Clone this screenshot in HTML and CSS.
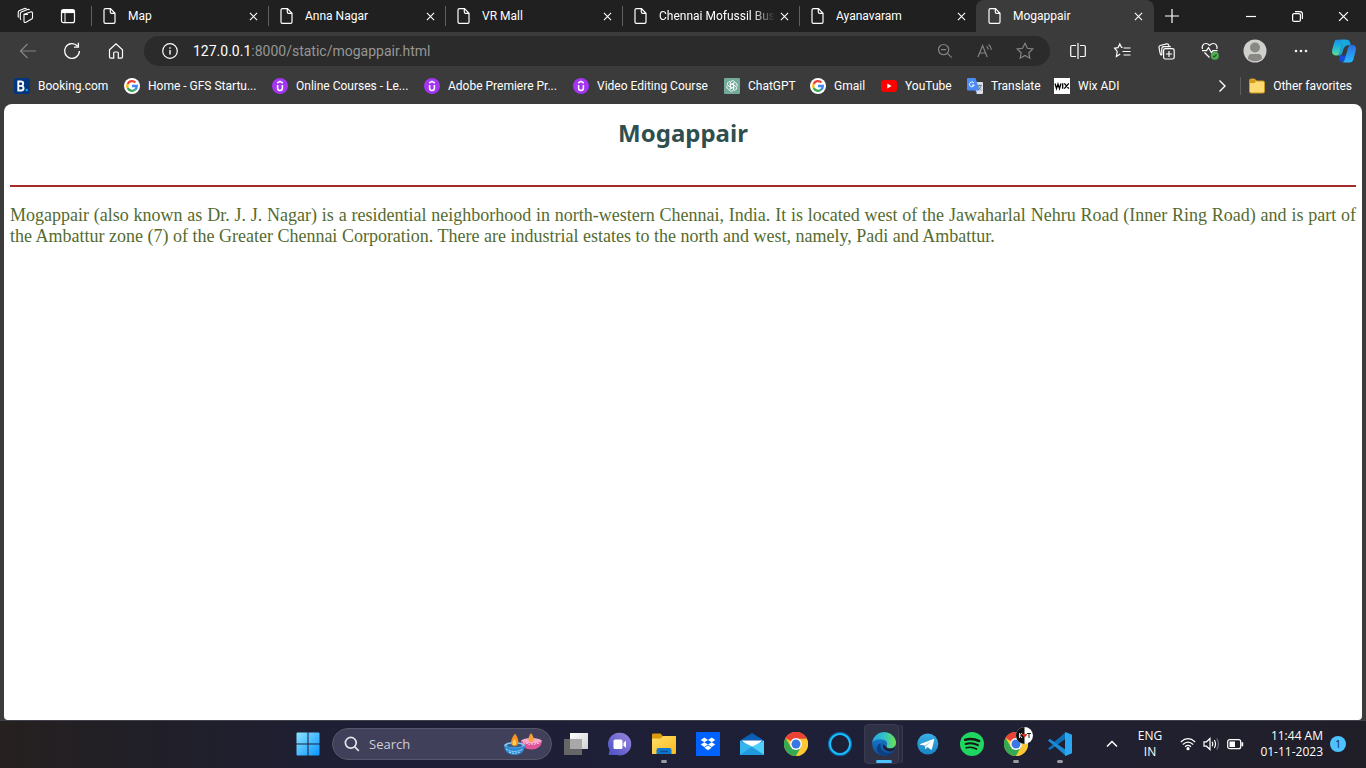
FILE: index.html
```html
<!DOCTYPE html>
<html lang="en">
<head>
<meta charset="utf-8">
<title>Mogappair</title>
<link rel="stylesheet" href="styles.css">
</head>
<body>
<svg class="defs" aria-hidden="true">
  <defs>
    <linearGradient id="g-win" x1="0" y1="0" x2="1" y2="1"><stop offset="0" stop-color="#8be4ff"/><stop offset="1" stop-color="#0a95ff"/></linearGradient>
    <linearGradient id="g-cop1" x1="0" y1="0" x2="0" y2="1"><stop offset="0" stop-color="#1a8fe6"/><stop offset=".5" stop-color="#22b8d8"/><stop offset="1" stop-color="#5fe08c"/></linearGradient>
    <linearGradient id="g-cop2" x1="0" y1="0" x2="0" y2="1"><stop offset="0" stop-color="#2a6fe0"/><stop offset="1" stop-color="#27b9ff"/></linearGradient>
    <linearGradient id="g-chat" x1="0" y1="1" x2="1" y2="0"><stop offset="0" stop-color="#4a4fc4"/><stop offset="1" stop-color="#9b86dd"/></linearGradient>
    <linearGradient id="g-folder" x1="0" y1="0" x2="1" y2="1"><stop offset="0" stop-color="#ffdf66"/><stop offset="1" stop-color="#fbb920"/></linearGradient>
    <linearGradient id="g-edge" x1="0" y1="0" x2="1" y2="0"><stop offset="0" stop-color="#27a4e0"/><stop offset=".5" stop-color="#2fc3c9"/><stop offset="1" stop-color="#6de04d"/></linearGradient>
    <linearGradient id="g-edge2" x1="0" y1="0" x2="0" y2="1"><stop offset="0" stop-color="#1b87dc"/><stop offset="1" stop-color="#0f4b94"/></linearGradient>
    <linearGradient id="g-tg" x1="0" y1="0" x2="0" y2="1"><stop offset="0" stop-color="#38b0e6"/><stop offset="1" stop-color="#1a84c4"/></linearGradient>
    <linearGradient id="g-task" x1="0" y1="0" x2="1" y2="1"><stop offset="0" stop-color="#fff"/><stop offset="1" stop-color="#d0d0d0"/></linearGradient>
    <symbol id="i-file" viewBox="0 0 16 16"><path d="M3.500.7h5L13 5.300V14q0 1.300-1.300 1.300H3.300Q2 15.300 2 14V2Q2 .7 3.500.7zM8.300.8V4q0 1.400 1.400 1.400h3.200"/></symbol>
    <symbol id="i-x" viewBox="0 0 10 10"><path d="M1 1l8 8M9 1L1 9"/></symbol>
    <symbol id="i-google" viewBox="0 0 16 16"><circle cx="8" cy="8" r="8" fill="#fff"/><g fill="none" stroke-width="2.300"><path d="M11.400 4.500A4.800 4.800 0 0 0 3.700 5.900" stroke="#ea4335"/><path d="M3.700 5.900a4.800 4.800 0 0 0 0 4.200" stroke="#fbbc05"/><path d="M3.700 10.100a4.800 4.800 0 0 0 7.400 1.600" stroke="#34a853"/><path d="M11.100 11.700A4.800 4.800 0 0 0 12.800 8H8" stroke="#4285f4"/></g></symbol>
    <symbol id="i-udemy" viewBox="0 0 16 16"><circle cx="8" cy="8" r="8" fill="#a435f0"/><path d="M5.200 5L8 3.400 10.800 5M5.600 7v3.200q0 2.200 2.400 2.200t2.400-2.200V7" fill="none" stroke="#fff" stroke-width="1.500"/></symbol>
    <symbol id="i-chrome" viewBox="0 0 24 24"><circle cx="12" cy="12" r="12" fill="#fcc934"/><path d="M12 12L1.600 6A12 12 0 0 1 22.400 6z" fill="#ea4335"/><path d="M1.600 6A12 12 0 0 0 12 24l5.200-9L12 12 6.800 15z" fill="#34a853"/><path d="M12 6.500h10.700A12 12 0 0 1 12 24l5-9z" fill="#fcc934"/><path d="M1.600 6A12 12 0 0 1 22.700 6.500H12z" fill="#ea4335"/><circle cx="12" cy="12" r="5.900" fill="#fff"/><circle cx="12" cy="12" r="4.500" fill="#3b78e7"/></symbol>
  </defs>
</svg>
<div class="window">
  <header class="browser">
    <nav class="tabstrip" aria-label="Tabs">
      <div class="tab-tools">
        <button class="plain" aria-label="Workspaces"><svg class="line" width="18" height="18" viewBox="0 0 18 18"><path d="M7 7.300l6.500-2.300q2-.5 2 1.200v4.500q0 1-.9 1.400L9 15.300q-2 .8-2-1zM7.500 7.500h3.500M4.200 12.800q-.9-.3-.9-1.500V7q0-1.600 1.500-2.200l5.700-2.200q1.500-.5 2 .5M1.600 10.500q-.4-.3-.4-1.300V5.600q0-1.600 1.300-2.200l5-1.900q1.200-.4 2 .2" stroke-width="1.100"/></svg></button>
        <button class="plain" aria-label="Tab actions"><svg class="line" width="16" height="16" viewBox="0 0 16 16"><rect x="1.500" y="1.700" width="13" height="13" rx="2"/><path d="M1.500 3.500h13" stroke-width="3.200"/><path d="M5 4v10" stroke-width="1"/></svg></button>
      </div>
      <div class="tab"><svg class="line" width="16" height="16"><use href="#i-file"/></svg><span>Map</span><button class="close" aria-label="Close Map"><svg class="line" width="9" height="9"><use href="#i-x"/></svg></button></div>
      <div class="tab"><svg class="line" width="16" height="16"><use href="#i-file"/></svg><span>Anna Nagar</span><button class="close" aria-label="Close Anna Nagar"><svg class="line" width="9" height="9"><use href="#i-x"/></svg></button></div>
      <div class="tab"><svg class="line" width="16" height="16"><use href="#i-file"/></svg><span>VR Mall</span><button class="close" aria-label="Close VR Mall"><svg class="line" width="9" height="9"><use href="#i-x"/></svg></button></div>
      <div class="tab"><svg class="line" width="16" height="16"><use href="#i-file"/></svg><span class="faded">Chennai Mofussil Bus</span><button class="close" aria-label="Close Chennai Mofussil Bus"><svg class="line" width="9" height="9"><use href="#i-x"/></svg></button></div>
      <div class="tab"><svg class="line" width="16" height="16"><use href="#i-file"/></svg><span>Ayanavaram</span><button class="close" aria-label="Close Ayanavaram"><svg class="line" width="9" height="9"><use href="#i-x"/></svg></button></div>
      <div class="tab active"><svg class="line" width="16" height="16"><use href="#i-file"/></svg><span>Mogappair</span><button class="close" aria-label="Close Mogappair"><svg class="line" width="9" height="9"><use href="#i-x"/></svg></button></div>
      <button class="plain new-tab" aria-label="New tab"><svg class="line" width="14" height="14" viewBox="0 0 14 14"><path d="M7 0v14M0 7h14"/></svg></button>
      <div class="win-controls">
        <button class="plain" aria-label="Minimize"><svg class="line" width="10" height="10" viewBox="0 0 10 10"><path d="M0 5.500h10"/></svg></button>
        <button class="plain" aria-label="Restore"><svg class="line" width="11" height="11" viewBox="0 0 11 11"><rect x=".6" y="2.600" width="7.800" height="7.800" rx="1.500"/><path d="M3 .6h5q2.400 0 2.400 2.400v5"/></svg></button>
        <button class="plain" aria-label="Close window"><svg class="line" width="11" height="11"><use href="#i-x"/></svg></button>
      </div>
    </nav>
    <div class="toolbar">
      <button class="plain dim" aria-label="Back"><svg class="line" width="18" height="16" viewBox="0 0 18 16"><path d="M17 8H1.500M8.500 1L1.500 8l7 7"/></svg></button>
      <button class="plain" aria-label="Refresh"><svg class="line" width="18" height="18" viewBox="0 0 18 18"><path d="M14.500 4A7.400 7.400 0 1 0 16.400 9M15.400.8v4.400H11" stroke-width="1.300"/></svg></button>
      <button class="plain" aria-label="Home"><svg class="line" width="16" height="16" viewBox="0 0 16 16"><path d="M1.500 6.800L8 .9l6.500 5.900v7q0 1.300-1.300 1.300h-2.900V10q0-1-1-1H6.700q-1 0-1 1v5.100H2.800q-1.300 0-1.300-1.300z"/></svg></button>
      <div class="omnibox">
        <button class="plain" aria-label="Site information"><svg class="line" width="16" height="16" viewBox="0 0 16 16"><circle cx="8" cy="8" r="7.300"/><path d="M8 7v4.500M8 4.300v1.500" stroke-width="1.400"/></svg></button>
        <div class="url" role="textbox" contenteditable="true" spellcheck="false" aria-label="Address"><b>127.0.0.1</b>:8000/static/mogappair.html</div>
        <button class="plain dim" aria-label="Zoom"><svg class="line" width="16" height="16" viewBox="0 0 16 16"><circle cx="6.600" cy="6.600" r="5.100"/><path d="M4 6.600h5.200M10.400 10.400l4.300 4.300"/></svg></button>
        <button class="plain dim" aria-label="Read aloud"><svg class="line" width="16" height="16" viewBox="0 0 16 16"><path d="M1 14L5.600 2.500 10.200 14M2.700 10h5.800M9.500 3.300q1.500 1 1.700 3.200M11.500 1.400q2.600 1.600 3 5.400"/></svg></button>
        <button class="plain dim" aria-label="Add to favorites"><svg class="line" width="18" height="18" viewBox="0 0 18 18"><path d="M9 1.300l2.400 5 5.400.7-4 3.700 1 5.500L9 13.500l-4.800 2.700 1-5.500-4-3.700 5.400-.7z"/></svg></button>
      </div>
      <button class="plain" aria-label="Split screen"><svg class="line" width="16" height="16" viewBox="0 0 16 16"><path d="M6 2.500H2q-1.300 0-1.300 1.300v8.400q0 1.300 1.300 1.300h4M10 2.500h4q1.300 0 1.300 1.300v8.400q0 1.300-1.300 1.300h-4M8 0v16"/></svg></button>
      <button class="plain" aria-label="Favorites"><svg class="line" width="17" height="16" viewBox="0 0 17 16"><path d="M8.500 4.400h-1L5.800.9 4 4.700.6 5.200l2.600 3.300-.8 5 3.800-2.400M9.500 5h7M8.500 8.500h8M9.500 12h7"/></svg></button>
      <button class="plain" aria-label="Collections"><svg class="line" width="17" height="17" viewBox="0 0 17 17"><rect x="5.600" y="5.600" width="10.600" height="10.400" rx="1.800"/><path d="M11 8v6M8 11h6M3.800 12.200Q2.500 12 2.200 10.600L1 4.500q-.2-1.600 1.200-2l6.500-1.600q1.700-.3 2 1.200l.3 1.400M3.800 12V6q0-2.200 2-2.300h7"/></svg></button>
      <button class="plain" aria-label="Browser essentials"><svg class="line" width="18" height="18" viewBox="0 0 18 18"><path d="M1.500 7C.5 4 2.300 1.500 5 1.500c1.700 0 2.800.8 3.600 1.800C9.500 2.300 10.600 1.500 12.300 1.500c2.700 0 4.400 2.500 3.500 5.500M3.500 10.500l5 5M1 8.700h4.500l2-3 3 5 1.500-2h4.500"/><circle cx="13.800" cy="13.700" r="4" fill="#4caf50" stroke="none"/><path d="M12 14l1.300 1 2.200-2.500" stroke="#28552a"/></svg></button>
      <button class="plain profile" aria-label="Profile"><svg width="24" height="24" viewBox="0 0 24 24"><circle cx="12" cy="12" r="11.500" fill="#cfcfcb"/><circle cx="12" cy="8.500" r="5" fill="#8a8884"/><path d="M5 20q0-5 3.500-5h7q3.500 0 3.500 5-7 4.500-14 0z" fill="#8a8884"/></svg></button>
      <button class="plain profile" aria-label="Settings and more"><svg width="14" height="4" viewBox="0 0 14 4" fill="#f2f2f2"><circle cx="2" cy="2" r="1.300"/><circle cx="7" cy="2" r="1.300"/><circle cx="12" cy="2" r="1.300"/></svg></button>
      <button class="plain copilot" aria-label="Copilot"><svg width="24" height="24" viewBox="0 0 24 24"><path d="M10 .7h5.500q2 0 2.700 2.300L19 6h-3q-3 0-4 3z" fill="#1b6ce0"/><path d="M7.500 16.500h7l-2 5q-.8 1.500-2.500 1.500-2 0-2.500-2z" fill="#164bd8"/><path d="M4.500.7H13q-2 .5-2.700 3L7.500 14q-.7 2.500-3 2.500-4.500 0-4.500-4 0-1 .3-2L2.300 3Q3 .7 4.500.7z" fill="url(#g-cop1)"/><path d="M8 .7h7q2 .3 2.500 2.500l.8 3H15q-2.500.5-3.500 3.500l-1.200 4q-.8 2.800-3.500 2.800H4.500q2.300-.2 3-2.700l2.300-8Q10.300 2 8 .7z" fill="#18a8dc"/><path d="M19 6h1.500q3.500.2 3.500 3.700 0 1-.3 2l-2.300 8.800q-.8 3-4 3H10q2-.3 2.800-3L16 9q.8-3 3-3z" fill="url(#g-cop2)"/></svg></button>
    </div>
    <nav class="bookmarks" aria-label="Favorites bar">
      <a href="#"><svg width="16" height="16" viewBox="0 0 16 16"><rect width="16" height="16" rx="2" fill="#003580"/><path d="M4.300 3.500v9h3q2.300 0 2.300-2.400 0-1.800-1.700-2.300 1.300-.5 1.300-2 0-2.300-2.300-2.300z" fill="none" stroke="#fff" stroke-width="1.900"/><path d="M4.300 7.800h4" stroke="#fff" stroke-width="1.500"/><circle cx="12.700" cy="12" r="1.300" fill="#1ba3e8"/></svg>Booking.com</a>
      <a href="#"><svg width="16" height="16"><use href="#i-google"/></svg>Home - GFS Startu...</a>
      <a href="#"><svg width="16" height="16"><use href="#i-udemy"/></svg>Online Courses - Le...</a>
      <a href="#"><svg width="16" height="16"><use href="#i-udemy"/></svg>Adobe Premiere Pr...</a>
      <a href="#"><svg width="16" height="16"><use href="#i-udemy"/></svg>Video Editing Course</a>
      <a href="#"><svg width="16" height="16" viewBox="0 0 16 16"><rect width="16" height="16" rx="1" fill="#74aa9c"/><g fill="none" stroke="#fff" stroke-width=".8"><path id="petal" d="M6.300 9V5.200Q6.300 2.700 8.500 2.700q1.600 0 2.300 1.300M6.300 7l3.400-2"/><use href="#petal" transform="rotate(60 8 8)"/><use href="#petal" transform="rotate(120 8 8)"/><use href="#petal" transform="rotate(180 8 8)"/><use href="#petal" transform="rotate(240 8 8)"/><use href="#petal" transform="rotate(300 8 8)"/></g></svg>ChatGPT</a>
      <a href="#"><svg width="16" height="16"><use href="#i-google"/></svg>Gmail</a>
      <a href="#"><svg width="16" height="16" viewBox="0 0 16 16"><rect y="2" width="16" height="12" rx="3" fill="#f00"/><path d="M6.300 5.500v5l4.300-2.500z" fill="#fff"/></svg>YouTube</a>
      <a href="#"><svg width="16" height="16" viewBox="0 0 16 16"><path d="M7 4h8q1 0 1 1v10q0 1-1 1H9.500z" fill="#dcdfe3"/><path d="M9 12.500h-2l3 3.500z" fill="#2f5fc4"/><path d="M1 0h7.500l4 12.500H1q-1 0-1-1V1q0-1 1-1z" fill="#4c8bf5"/><path d="M6.800 4.900A2.400 2.400 0 1 0 7.200 7H5" fill="none" stroke="#fff"/><path d="M10.500 7.500h4.500M12.600 6.500v1M14 7.800q-.6 2.600-2.800 4M11.300 8.200q1 2.600 3.300 4" fill="none" stroke="#5d7c8c" stroke-width=".9"/></svg>Translate</a>
      <a href="#"><svg width="16" height="16" viewBox="0 0 16 16"><path d="M0 0h16v16H0z" fill="#fff"/><path d="M1 5.500L2.500 10.500 4 6l1.500 4.500L7 5.500M8.700 5.300v5.400M10.300 5.300l4.500 5.400M14.800 5.300l-4.500 5.400" fill="none" stroke="#000" stroke-width="1.300"/></svg>Wix ADI</a>
      <button class="plain more" aria-label="More favorites"><svg class="line" width="8" height="14" viewBox="0 0 8 14"><path d="M1.500 1.500L7 7l-5.500 5.500" stroke-width="1.400"/></svg></button>
      <a class="other" href="#"><svg width="16" height="16" viewBox="0 0 16 16"><path d="M.5 2.500Q.5 1 2 1h3.500l2 2H14q1.500 0 1.500 1.500v9Q15.500 15 14 15H2q-1.500 0-1.500-1.500z" fill="#ffda73" stroke="#c89a1e"/><path d="M1 2.500Q1 1.500 2 1.500h3.300L7 3.300 5.500 5H1z" fill="#d79c1b"/></svg>Other favorites</a>
    </nav>
  </header>
  <main class="page">
    <h1>Mogappair</h1>
    <hr>
    <p>Mogappair (also known as Dr. J. J. Nagar) is a residential neighborhood in north-western Chennai, India. It is located west of the Jawaharlal Nehru Road (Inner Ring Road) and is part of the Ambattur zone (7) of the Greater Chennai Corporation. There are industrial estates to the north and west, namely, Padi and Ambattur.</p>
  </main>
  <footer class="taskbar">
    <div class="apps">
      <button class="app" aria-label="Start"><svg width="24" height="24" viewBox="0 0 24 24" fill="url(#g-win)"><path d="M1.500.5h10v11H.5v-10q0-1 1-1zM12.500.5h10q1 0 1 1v10h-11zM.5 12.500h11v11h-10q-1 0-1-1zM12.500 12.500h11v10q0 1-1 1h-10z"/></svg></button>
      <label class="search">
        <svg width="16" height="16" viewBox="0 0 16 16" fill="none" stroke="#e4e4ea" stroke-width="1.700"><circle cx="6.800" cy="6.800" r="5.400"/><path d="M10.800 10.800l4 4"/></svg>
        <input type="text" placeholder="Search" aria-label="Search">
        <svg width="40" height="24" viewBox="0 0 40 24"><ellipse cx="28.500" cy="9" rx="10.500" ry="3" fill="#f9a9cc"/><path d="M18 9q1 8.500 10.500 8.500T39 9q-10 5-21 0z" fill="#e0559a"/><path d="M20 10.500l2 1 2-.2 2 1.200 2-.8 3 .8 2-1 3-.2 1.500-1" stroke="#ffd9ea" fill="none" stroke-dasharray="2 1"/><path d="M28 1q4 5 2 8.500-3 1.500-4.500-1Q25 5 28 1z" fill="#f9a03a"/><ellipse cx="11.500" cy="13.500" rx="10.500" ry="3.500" fill="#8dcaf0"/><ellipse cx="11.500" cy="13.500" rx="8" ry="2" fill="#35628f"/><path d="M1 13.500q1 9.500 10.500 9.500T22 13.500q-10 5-21 0z" fill="#2c8bd4"/><path d="M3 17q8 5 17 0M6 20q5 2.500 11 0" stroke="#b9e3fa" fill="none" stroke-dasharray="2 1"/><path d="M12 1.500q5 6.500 2.500 11.500-3 2.500-6-.5Q7 8 12 1.500z" fill="#f7941e"/><path d="M11.500 7q2.500 3 1 6h-2.700q-1-3 1.700-6z" fill="#ffd15c"/></svg>
      </label>
      <button class="app" aria-label="Task view"><svg width="24" height="24" viewBox="0 0 24 24"><path d="M6 1h18v16H6z" fill="url(#g-task)"/><path d="M0 7h18v16H0z" fill="#666"/><path d="M6 7h12v10H6z" fill="#a8a8a8"/></svg></button>
      <button class="app" aria-label="Chat"><svg width="24" height="24" viewBox="0 0 24 24"><path d="M12 .8A11.300 11.300 0 1 1 9 23H1.200q-.7 0-.5-1l1-4A11.300 11.300 0 0 1 12 .8z" fill="url(#g-chat)"/><rect x="5.500" y="7.500" width="9" height="9.500" rx="1.500" fill="#fff"/><path d="M15.500 11L18 8.500v7.500l-2.500-2.500z" fill="#fff"/></svg></button>
      <button class="app running" aria-label="File Explorer"><svg width="24" height="24" viewBox="0 0 24 24"><path d="M0 2.500Q0 1.500 1 1.500h7q1 0 1.500 1L11 4.500V8H0z" fill="#d99a0c"/><path d="M0 6.500h8.500L11 4h13v17q0 1-1 1H0z" fill="url(#g-folder)"/><path d="M4.500 22v-4Q4.500 16 6.500 16h11q2 0 2 2v4z" fill="#0f78d0"/><path d="M8 19.500h8" stroke="#0a4d96" stroke-width="1.500"/></svg></button>
      <button class="app" aria-label="Dropbox"><svg width="24" height="24" viewBox="0 0 24 24"><path d="M0 0h24v24H0z" fill="#0061fe"/><path d="M8.300 5.500l3.700 2.400-3.700 2.300-3.600-2.300zM15.700 5.500l3.600 2.400-3.600 2.300L12 7.900zM8.300 10.200l3.700 2.400-3.700 2.300-3.600-2.300zM15.700 10.200l3.600 2.400-3.600 2.300-3.700-2.300zM8.300 15.700l3.700-2.300 3.700 2.300-3.700 2.500z" fill="#fff"/></svg></button>
      <button class="app" aria-label="Mail"><svg width="24" height="24" viewBox="0 0 24 24"><path d="M0 8.500L12 1l12 7.500v5H0z" fill="#0a5eb4"/><path d="M1.500 8.500h21L12 17z" fill="#fff"/><path d="M0 8.500L14 15.500 24 23H0z" fill="#35b5ee"/><path d="M24 8.500v14.500L11 15.300z" fill="#4fd0fa"/><path d="M0 23L12 14.800 24 23z" fill="#2099df"/></svg></button>
      <button class="app" aria-label="Chrome"><svg width="24" height="24"><use href="#i-chrome"/></svg></button>
      <button class="app" aria-label="Cortana"><svg width="24" height="24" viewBox="0 0 24 24" fill="none"><circle cx="12" cy="12" r="10.500" stroke="#0b6fb8" stroke-width="3"/><circle cx="12" cy="12" r="10" stroke="#1cc2fb" stroke-width="1.700"/></svg></button>
      <button class="app current running" aria-label="Edge"><svg width="24" height="24" viewBox="0 0 24 24"><circle cx="12" cy="12" r="11.800" fill="url(#g-edge2)"/><path d="M.3 10.500C1 4.500 6 .2 12 .2c7 0 12 5 12 10.300 0 3.800-2.800 6-5.800 6-3 0-4.500-1.200-3.700-2.500 1.500-2.500.5-5.300-3-6.200C6.500 6.300 2 8 .3 10.500z" fill="url(#g-edge)"/><path d="M8.600 11.500C7.500 16.500 11 21 16.500 21q3 0 5.700-2.200C19 24 12.500 25 8 22 3.500 18.500 4.500 12.500 8.600 11.500z" fill="#0d3f80"/><path d="M14.500 14c-.8 1.300.7 2.500 3.700 2.500 2 0 4-.8 5.200-2.500q-.3 3-2.200 4.700-4 1.800-8-.7-3-2.500-2-6 2 3 3.300 2z" fill="#1f2038"/></svg></button>
      <button class="app" aria-label="Telegram"><svg width="24" height="24" viewBox="0 0 24 24"><circle cx="11.800" cy="12" r="10.500" fill="url(#g-tg)"/><path d="M4.300 12L17.500 7q.9-.2.700.8l-2.200 9.300q-.3 1-1.200.4l-3.300-2.400-1.600 1.600q-.7.500-.8-.4l-.4-2.800-4.400-.7q-.6-.4 0-.8z" fill="#fff"/><path d="M8.700 13.500l6.800-4.400-5.300 5.300-.3 2.300z" fill="#b7d7ea"/></svg></button>
      <button class="app" aria-label="Spotify"><svg width="24" height="24" viewBox="0 0 24 24"><circle cx="12" cy="12" r="12" fill="#1ed760"/><g fill="none" stroke="#191414" stroke-linecap="round"><path d="M5 7.800q7.500-2.100 14.300 1.300" stroke-width="2.300"/><path d="M5.600 12q6.500-1.900 12.300 1.200" stroke-width="2"/><path d="M6.200 15.800q5.500-1.500 10.300 1.200" stroke-width="1.700"/></g></svg></button>
      <button class="app running" aria-label="Chrome profile"><svg width="24" height="24"><use href="#i-chrome"/></svg><svg class="badge" width="17" height="17" viewBox="0 0 17 17"><circle cx="8.500" cy="8.500" r="8.500" fill="#fff"/><path d="M8.500 0v17a8.500 8.500 0 0 1 0-17z" fill="#111"/><path d="M3.500 6v5M6 6L4 8.500 6 11" stroke="#ddd" fill="none"/><path d="M11 6.500h4M13 6.500V11" stroke="#222"/><path d="M8.500 10.500L6 8q0-2 2.500-.8Q11 6 11 8z" fill="#e8261c"/></svg></button>
      <button class="app running" aria-label="Visual Studio Code"><svg width="24" height="24" viewBox="0 0 24 24"><path d="M0 8.500L2 7l4 3L18 0v6.500L2 18l-2-1.500 5-4z" fill="#0b70b8"/><path d="M0 8.500L2 7l16 11v6L6.500 14z" fill="#1b8ad4"/><path d="M17.500 0L24 2.800v18.400L17.500 24q-.5-.3-.5-1V1q0-.7.500-1z" fill="#2aa6f2"/></svg></button>
    </div>
    <div class="tray">
      <button class="plain chevron" aria-label="Show hidden icons"><svg width="12" height="8" viewBox="0 0 12 8" fill="none" stroke="#fff" stroke-width="1.500"><path d="M1 6.500l5-5 5 5"/></svg></button>
      <button class="plain lang">ENG<br>IN</button>
      <button class="plain status" aria-label="Network, volume and battery">
        <svg width="16" height="14" viewBox="0 0 16 14" fill="none" stroke="#fff" stroke-width="1.200"><path d="M.8 5Q8-1.600 15.200 5M2.800 7.500Q8 2.800 13.200 7.500M5 9.700q3-2.500 6 0"/><circle cx="8" cy="11.700" r="1" fill="#fff"/></svg>
        <svg width="17" height="14" viewBox="0 0 17 14" fill="none" stroke="#fff" stroke-width="1.200"><path d="M1 4.800h2.500L7 1.500v11L3.500 9.200H1zM9.200 4.800q1.300 2.200 0 4.400M11.300 3q2.500 4 0 8"/><path d="M13.700 1.500q3.500 5.500 0 11" stroke="#70707a"/></svg>
        <svg width="17" height="12" viewBox="0 0 17 12"><rect x=".7" y="1.700" width="13" height="9" rx="2" fill="none" stroke="#fff" stroke-width="1.200"/><path d="M2.500 3.500h5.500v5.500H2.500zM14.500 4.300h1.700v4h-1.700z" fill="#fff"/></svg>
      </button>
      <button class="plain clock">11:44 AM<br>01-11-2023</button>
      <button class="plain count" aria-label="Notifications">1</button>
    </div>
  </footer>
</div>
</body>
</html>
```
FILE: styles.css
```css
* { box-sizing: border-box; }

body {
  margin: 0;
  font-family: "Open Sans", "Noto Sans", sans-serif;
  font-size: 12px;
  color: #fff;
}

.defs { position: absolute; width: 0; height: 0; }

.window {
  display: flex;
  flex-direction: column;
  height: 100vh;
  background: #3b3b3b;
}

button {
  margin: 0;
  padding: 0;
  border: 0;
  background: none;
  color: inherit;
  font: inherit;
}

svg { flex: none; display: block; overflow: visible; }

.line {
  fill: none;
  stroke: currentColor;
  stroke-width: 1.2px;
}

.plain {
  display: flex;
  flex: none;
  align-items: center;
  justify-content: center;
}

/* Tab strip */
.tabstrip {
  display: flex;
  height: 32px;
  background: #202020;
}

.tab-tools {
  display: flex;
  flex: none;
  width: 91px;
  padding-left: 5px;
}

.tab-tools .plain { width: 42px; }

.tab {
  display: flex;
  align-items: center;
  flex: 0 1 177px;
  min-width: 0;
  padding: 0 10px 0 11px;
  position: relative;
}

.tab::before {
  content: "";
  position: absolute;
  left: 0;
  top: 6px;
  bottom: 6px;
  width: 1px;
  background: #606060;
}

.tab span {
  flex: 1;
  min-width: 0;
  margin-left: 10px;
  overflow: hidden;
  white-space: nowrap;
  font-family: Roboto, sans-serif;
}

.tab .faded {
  mask-image: linear-gradient(to right, #000 80%, transparent);
}

.close {
  display: flex;
  align-items: center;
  justify-content: flex-end;
  width: 9px;
  height: 16px;
  margin-left: 5px;
}

.tab.active {
  flex-basis: 178px;
  padding-right: 11px;
  border-radius: 8px 8px 0 0;
  background: #3b3b3b;
}

.tab.active::before { display: none; }

.new-tab { width: 36px; }

.win-controls { display: flex; margin-left: auto; }

.win-controls .plain { width: 46px; }

/* Toolbar */
.toolbar {
  display: flex;
  align-items: center;
  height: 38px;
  padding: 0 2px 0 6px;
}

.toolbar .plain { width: 44px; height: 30px; }

.toolbar .dim { color: #848484; }

.toolbar .profile { width: 46px; }

.toolbar .copilot { width: 40px; }

.omnibox {
  display: flex;
  flex: 1;
  align-items: center;
  height: 30px;
  margin: 0 6px;
  padding: 0 5px 0 6px;
  border-radius: 15px;
  background: #2b2b2b;
}

.omnibox .plain { width: 40px; }

.url {
  flex: 1;
  min-width: 0;
  margin-left: 3px;
  overflow: hidden;
  white-space: nowrap;
  font-family: Roboto, sans-serif;
  font-size: 14px;
  line-height: 20px;
  color: #969696;
}

.url b { font-weight: 400; color: #fff; }

/* Favorites bar */
.bookmarks {
  display: grid;
  grid-template-columns: 110px 148px 152px 149px 151px 86px 71px 86px 87px auto 1fr auto;
  align-items: center;
  height: 34px;
  padding: 0 14px 2px;
  font-family: Roboto, sans-serif;
}

.bookmarks a {
  display: flex;
  align-items: center;
  gap: 8px;
  height: 16px;
  color: #fff;
  text-decoration: none;
  white-space: nowrap;
}

.bookmarks .more { width: 8px; margin-right: 14px; justify-self: end; }

.bookmarks .other {
  height: 18px;
  padding-left: 8px;
  border-left: 1px solid #5c5c5c;
}

/* Web page */
.page {
  flex: 1;
  min-height: 0;
  margin: 0 4px;
  padding: 12px 6px;
  overflow: auto;
  border-radius: 8px 8px 4px 4px;
  background: #fff;
}

.page h1 {
  margin: 0 0 36px;
  font-family: "Noto Sans", sans-serif;
  font-size: 24px;
  line-height: 33px;
  text-align: center;
  color: darkslategray;
}

.page hr {
  height: 2px;
  margin: 0;
  border: 0;
  background: brown;
}

.page p {
  margin: 18px 0;
  font-family: "Liberation Serif", serif;
  font-size: 18px;
  line-height: 21px;
  text-align: justify;
  color: darkolivegreen;
}

/* Taskbar */
.taskbar {
  display: grid;
  grid-template-columns: 1fr auto 1fr;
  height: 48px;
  padding-left: 2px;
  border-top: 1px solid #41414b;
  background: linear-gradient(to right, #26201f, #201f29 12%, #1e1f36 26%, #1e2038 60%, #202030 82%, #201f28);
}

.apps { grid-column: 2; display: flex; align-items: center; }

.app {
  display: flex;
  align-items: center;
  justify-content: center;
  position: relative;
  width: 44px;
  height: 46px;
}

.apps, .tray { height: 46px; }

.app.running::after {
  content: "";
  position: absolute;
  bottom: 4px;
  left: 19px;
  width: 6px;
  height: 3px;
  border-radius: 2px;
  background: #9a9aa2;
}

.app.current::after { left: 14px; width: 16px; background: #4cc2ff; }

.app.current::before {
  content: "";
  position: absolute;
  inset: 3px 7px 3px 2px;
  border: 1px solid #3a3b50;
  border-radius: 4px;
  background: #ffffff14;
  box-shadow: 4px 0 0 -1px #2b2c42, 5px 0 0 -1px #3a3b50;
}

.app.current svg { position: relative; }

.badge { position: absolute; left: 22px; top: 6px; }

.search {
  display: flex;
  align-items: center;
  gap: 9px;
  width: 220px;
  height: 32px;
  margin: 0 2px;
  padding: 0 8px 0 11px;
  border: 1px solid #56566a;
  border-radius: 16px;
  background: #40405a;
}

.search input {
  flex: 1;
  min-width: 0;
  padding: 0;
  border: 0;
  outline: 0;
  background: none;
  font: 13px/20px "Open Sans", sans-serif;
  color: #fff;
}

.search input::placeholder { color: #cfcfd8; }

.tray {
  grid-column: 3;
  display: flex;
  align-items: center;
  justify-content: flex-end;
  padding-right: 20px;
  line-height: 16px;
}

.chevron { width: 24px; }

.lang { width: 52px; }

.status { gap: 7px; width: 64px; margin-left: 4px; }

.clock { width: 79px; justify-content: flex-end; text-align: right; }

.count {
  width: 16px;
  height: 16px;
  margin-left: 7px;
  border-radius: 50%;
  background: #4cc2ff;
  font-size: 10px;
  color: #14202c;
}
```
